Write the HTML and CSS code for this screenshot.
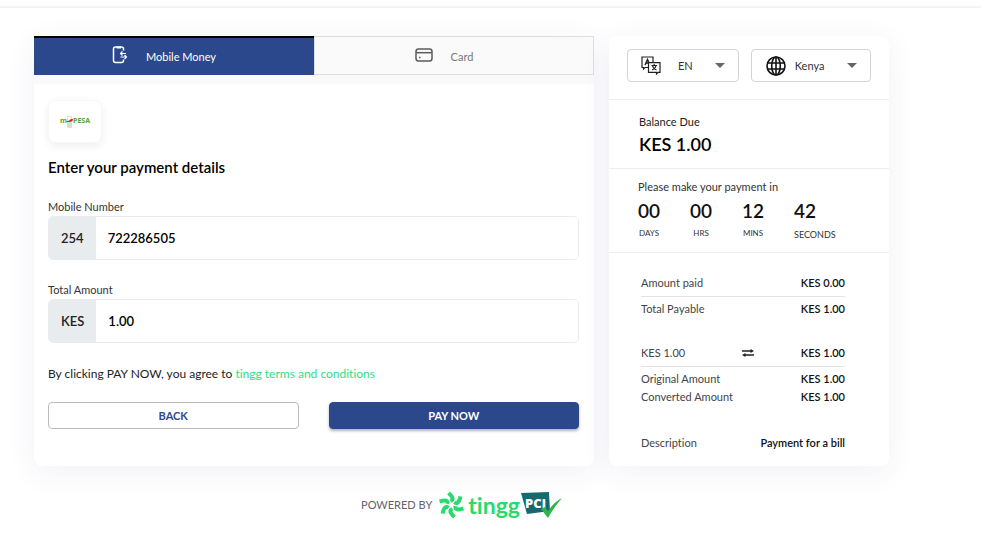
FILE: index.html
```html
<!DOCTYPE html>
<html lang="en">
<head>
<meta charset="utf-8">
<meta name="viewport" content="width=device-width, initial-scale=1">
<title>Checkout</title>
<link rel="stylesheet" href="styles.css">
</head>
<body>
<div class="topline"></div>
<div class="checkout">
  <main class="card payment">
    <nav class="tabs">
      <button class="tab tab-active" type="button">
        <svg width="16" height="18" viewBox="0 0 16 18" fill="none" stroke="currentColor" stroke-width="1.5" stroke-linejoin="round"><path d="M11.500 4.500V3Q11.500 1 9.500 1H3.500Q1.500 1 1.500 3V14.500Q1.500 16.500 3.500 16.500H9.500Q11.500 16.500 11.500 14.500V13.500"/><path d="M4.500 1.500H9" stroke-width="2"/><path d="M8 7.500H14M10.500 5.500L8.500 7.500L10.500 9.500M8.500 11H14.500M12.500 9L14.500 11L12.500 13" stroke-width="1.200"/></svg>
        <span>Mobile Money</span>
      </button>
      <button class="tab" type="button">
        <svg width="18" height="14" viewBox="0 0 18 14" fill="none" stroke="#5c5c5c" stroke-width="1.500"><rect x="1" y="1" width="16" height="12" rx="2.500"/><path d="M1 4.700H17"/><path d="M4 9.500H5.500" stroke-width="1.500"/></svg>
        <span>Card</span>
      </button>
    </nav>
    <form class="form">
      <div class="provider">
        <svg width="32" height="14" viewBox="0 0 32 14" role="img" aria-label="M-PESA"><rect x="8" y="1" width="5" height="12" rx="1" fill="#d5e3be"/><rect x="9" y="2" width="3" height="5" fill="#fff"/><path d="M7.500 6Q10 6.500 11 4.500L14 3.800L13.500 6Q11 7.500 7.500 6.800Z" fill="#d3252b"/><text x="1" y="8" class="mpesa">m</text><text x="14" y="8" class="mpesa">PESA</text></svg>
      </div>
      <h1>Enter your payment details</h1>
      <label class="label" for="mobile">Mobile Number</label>
      <div class="field"><span class="prefix">254</span><input id="mobile" type="tel" value="722286505"></div>
      <label class="label" for="amount">Total Amount</label>
      <div class="field"><span class="prefix">KES</span><input id="amount" type="text" value="1.00"></div>
      <p class="terms">By clicking PAY NOW, you agree to <a href="#terms">tingg terms and conditions</a></p>
      <div class="actions">
        <button class="btn btn-back" type="button">BACK</button>
        <button class="btn btn-pay" type="button">PAY NOW</button>
      </div>
    </form>
  </main>

  <aside class="card side">
    <div class="selectors">
      <label class="picker picker-lang">
        <svg width="20" height="19" viewBox="0 0 20 19" fill="none" stroke="#222" stroke-width="1.200"><path d="M7 11.500H4L2.500 13V11.500H1V1H12V6.500"/><path d="M4 9L6.500 3.500L9 9M5 7H8" stroke-width="1.500"/><path d="M7.500 6.700H19V16.300H17L15.500 18V16.300H7.500Z" fill="#fff"/><path d="M10.500 9.500H16M13.200 8V9.500M15 9.500Q14.500 12.500 11 14M11.500 10Q12.500 13 15.500 14" stroke-width="1.200"/></svg>
        <select aria-label="Language"><option>EN</option></select>
        <svg class="arrow" width="10" height="5" viewBox="0 0 10 5"><path d="M0 0H10L5 5Z" fill="#666"/></svg>
      </label>
      <label class="picker picker-country">
        <svg width="20" height="20" viewBox="0 0 20 20" fill="none" stroke="#111" stroke-width="1.600"><circle cx="10" cy="10" r="9"/><ellipse cx="10" cy="10" rx="4.300" ry="9"/><path d="M10 1V19M1.500 7H18.500M1.500 13H18.500"/></svg>
        <select aria-label="Country"><option>Kenya</option></select>
        <svg class="arrow" width="10" height="5" viewBox="0 0 10 5"><path d="M0 0H10L5 5Z" fill="#666"/></svg>
      </label>
    </div>
    <section class="balance">
      <p>Balance Due</p>
      <strong>KES 1.00</strong>
    </section>
    <section class="timer">
      <p>Please make your payment in</p>
      <div class="units">
        <div class="unit"><b>00</b><span>DAYS</span></div>
        <div class="unit"><b>00</b><span>HRS</span></div>
        <div class="unit"><b>12</b><span>MINS</span></div>
        <div class="unit unit-seconds"><b>42</b><span>SECONDS</span></div>
      </div>
    </section>
    <section class="summary">
      <div class="row ruled"><span>Amount paid</span><b>KES 0.00</b></div>
      <div class="row"><span>Total Payable</span><b>KES 1.00</b></div>
      <div class="row ruled spaced exchange"><span>KES 1.00</span>
        <svg width="12" height="8" viewBox="0 0 12 8" fill="#222"><path d="M0 1.200H8.500V0L12 2L8.500 4V2.800H0ZM12 5.200H3.500V4L0 6L3.500 8V6.800H12Z"/></svg>
        <b>KES 1.00</b></div>
      <div class="row"><span>Original Amount</span><b>KES 1.00</b></div>
      <div class="row"><span>Converted Amount</span><b>KES 1.00</b></div>
      <div class="row spaced"><span>Description</span><b>Payment for a bill</b></div>
    </section>
  </aside>

  <footer class="footer">
    <span class="powered">POWERED BY</span>
    <svg width="27" height="26" viewBox="-13.500 -13 27 26" fill="none" stroke="#27dc6c" stroke-width="4"><path d="M-1 -4Q4 -6 -3 -12"/><path d="M-1 -4Q4 -6 -3 -12" transform="rotate(60)"/><path d="M-1 -4Q4 -6 -3 -12" transform="rotate(120)"/><path d="M-1 -4Q4 -6 -3 -12" transform="rotate(180)"/><path d="M-1 -4Q4 -6 -3 -12" transform="rotate(240)"/><path d="M-1 -4Q4 -6 -3 -12" transform="rotate(300)"/></svg>
    <span class="brand">tingg</span>
    <svg width="41" height="28" viewBox="0 0 41 28" role="img" aria-label="PCI"><path d="M0 2L28 1L29 20L6 23Z" fill="#17696f"/><text x="4" y="17" class="pci">PCi</text><path d="M20 18L24 16L27 20Q33 11 41 7Q33 16 27 27Z" fill="#2fb34a"/></svg>
  </footer>
</div>
</body>
</html>
```
FILE: styles.css
```css
* { box-sizing: border-box; }
body {
  margin: 0;
  background: #fff;
  color: #222;
  font-family: Lato, "Liberation Sans", sans-serif;
  font-size: 11px;
  line-height: 16px;
  font-variant-ligatures: none;
}
h1, p { margin: 0; }
button, input, select { font-family: inherit; }
.topline { height: 8px; border-bottom: 2px solid #f4f4f5; }
.checkout {
  display: grid;
  grid-template-columns: 2fr 1fr;
  column-gap: 15px;
  padding: 28px 92px 0 34px;
}
.card {
  background: #fff;
  border-radius: 8px;
  box-shadow: 0 6px 30px rgba(60, 60, 140, 0.07);
}
.tabs {
  display: grid;
  grid-template-columns: 1fr 1fr;
  padding-bottom: 9px;
  background: #fafafa;
}
.tab {
  display: flex;
  align-items: center;
  justify-content: center;
  gap: 18px;
  height: 39px;
  padding: 0 20px 2px 0;
  border: 1px solid #dedede;
  background: #fafafa;
  color: #777;
  font-size: 11px;
}
.tab span { padding-top: 3px; }
.tab-active {
  padding-bottom: 4px;
  border: 0;
  border-top: 2px solid #000;
  background: #2c488c;
  color: #fff;
}
.form { padding: 16px 15px 37px 14px; }
.provider {
  display: flex;
  align-items: center;
  justify-content: center;
  width: 54px;
  height: 43px;
  border: 1px solid #f7f7f7;
  border-radius: 8px;
  box-shadow: 0 3px 8px rgba(0, 0, 0, 0.07);
}
.mpesa { font: 700 7px "Open Sans", sans-serif; fill: #57a52c; }
h1 {
  margin: 14px 0 22px;
  color: #000;
  font-size: 15px;
  line-height: 20px;
  font-weight: 600;
}
.label { display: block; color: #333; }
.field {
  display: flex;
  height: 44px;
  margin: 1px 0 22px;
  border: 1px solid #e9ebed;
  border-radius: 5px;
  overflow: hidden;
}
.prefix {
  display: flex;
  align-items: center;
  padding: 0 12px;
  background: #e9ecef;
  font-size: 13px;
  font-weight: 600;
}
.field input {
  flex: 1;
  min-width: 0;
  padding: 0 12px;
  border: 0;
  background: #fff;
  color: #000;
  font-size: 13px;
  font-weight: 600;
}
.terms { padding-top: 1px; font-size: 12px; }
.terms a { color: #31dc86; text-decoration: none; }
.actions {
  display: grid;
  grid-template-columns: 1fr 1fr;
  gap: 30px;
  margin-top: 20px;
}
.btn {
  height: 27px;
  border: 1px solid #bbb;
  border-radius: 4px;
  background: #fff;
  color: #2c488c;
  font-size: 11px;
  font-weight: 700;
}
.btn-pay {
  border-color: #2c488c;
  background: #2c488c;
  color: #fff;
  box-shadow: 0 2px 3px rgba(0, 0, 0, 0.3);
}
.selectors {
  display: flex;
  gap: 12px;
  padding: 13px 18px 17px;
  border-bottom: 1px solid #eeeeef;
}
.picker {
  display: flex;
  align-items: center;
  flex: 11;
  min-width: 0;
  height: 33px;
  padding: 0 13px;
  border: 1px solid #d4d4d4;
  border-radius: 4px;
}
.picker-country { flex: 12; padding-left: 14px; }
.picker select {
  flex: 1;
  min-width: 0;
  padding: 0 0 0 17px;
  border: 0;
  appearance: none;
  background: none;
  color: #333;
  font-size: 11px;
}
.picker-country select { padding-left: 9px; }
.balance {
  padding: 14px 30px 12px;
  border-bottom: 1px solid #eeeeef;
}
.balance strong {
  display: block;
  margin-top: 2px;
  color: #000;
  font-size: 18px;
  line-height: 24px;
  font-weight: 600;
}
.timer {
  padding: 10px 29px 9px;
  border-bottom: 1px solid #eeeeef;
  color: #333;
}
.units {
  display: grid;
  grid-template-columns: repeat(4, 52px);
  justify-items: start;
  margin-top: 4px;
}
.unit {
  display: flex;
  flex-direction: column;
  align-items: center;
  font-size: 8px;
}
.unit b {
  margin-bottom: 2px;
  color: #111;
  font-size: 19px;
  line-height: 24px;
  font-weight: 600;
}
.unit-seconds { align-items: flex-start; font-size: 9px; }
.unit-seconds b { margin-bottom: 4px; }
.summary { padding: 19px 44px 12px 32px; }
.row {
  display: flex;
  justify-content: space-between;
  align-items: center;
  line-height: 18px;
  color: #444;
}
.row b { color: #111; font-weight: 600; }
.ruled {
  margin-bottom: 3px;
  padding: 2px 0 4px;
  border-bottom: 1px solid #e2e3e4;
}
.spaced { margin-top: 24px; }
.spaced:last-child { margin-top: 28px; }
.exchange {
  display: grid;
  grid-template-columns: 11fr 12px 10fr;
}
.exchange b { text-align: right; }
.footer {
  grid-column: 1 / -1;
  display: flex;
  align-items: center;
  justify-content: center;
  margin-top: 24px;
  height: 30px;
}
.powered { margin-right: 6px; color: #62636b; }
.brand {
  margin: 0 1px 0 3px;
  color: #27dc6c;
  font-size: 23px;
  line-height: 28px;
  font-weight: 700;
}
.pci { font: 800 13px "Open Sans", sans-serif; fill: #fff; }
```
